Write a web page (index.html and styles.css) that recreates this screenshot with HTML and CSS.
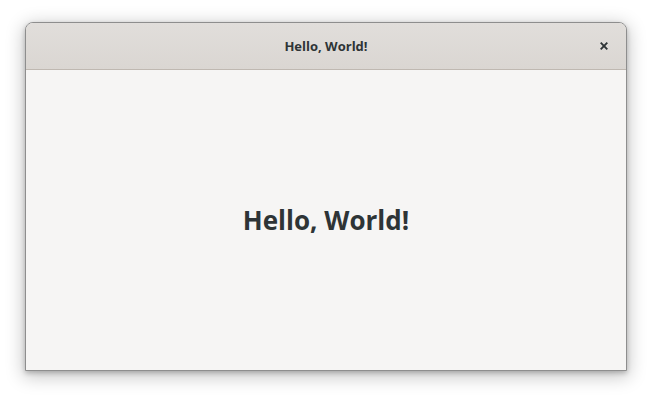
FILE: index.html
```html
<!DOCTYPE html>
<html>
<head>
<meta charset="utf-8">
<link rel="stylesheet" href="styles.css">
</head>
<body>
<div class="window">
  <header class="headerbar">
    <span class="title">Hello, World!</span>
    <button class="close" aria-label="Close">
      <svg width="8" height="8" viewBox="0 0 8 8"><path d="M0.7 0.7 L7.3 7.3 M7.3 0.7 L0.7 7.3" stroke="#2e3436" stroke-width="1.9" stroke-linecap="butt"/></svg>
    </button>
  </header>
  <main class="content">
    <h1 class="greeting">Hello, World!</h1>
  </main>
</div>
</body>
</html>
```
FILE: styles.css
```css
html, body {
  margin: 0;
  padding: 0;
  background: #ffffff;
}
body {
  box-sizing: border-box;
  min-height: 399px;
  padding: 22px 0 28px;
  font-family: "Open Sans", "DejaVu Sans", sans-serif;
  color: #2e3436;
}
.window {
  box-sizing: border-box;
  width: 602px;
  height: 349px;
  margin: 0 0 0 25px;
  border: 1px solid #8e8e8e;
  border-radius: 8px 8px 0 0;
  background: #f6f5f4;
  box-shadow: 0 4px 18px 2px rgba(0,0,0,0.22), 0 2px 5px rgba(0,0,0,0.22);
  display: flex;
  flex-direction: column;
  overflow: hidden;
}
.headerbar {
  position: relative;
  height: 46px;
  flex: 0 0 46px;
  background: linear-gradient(#e1dedb, #dad6d2);
  border-bottom: 1px solid #bfb8b1;
  display: flex;
  align-items: center;
  justify-content: center;
}
.title {
  font-weight: 700;
  font-size: 13px;
}
.close {
  position: absolute;
  right: 18px;
  top: 19px;
  width: 8px;
  height: 8px;
  padding: 0;
  border: 0;
  background: none;
  display: flex;
}
.content {
  flex: 1;
  display: flex;
  align-items: center;
  justify-content: center;
}
.greeting {
  margin: 0;
  font-size: 26px;
  font-weight: 700;
}
```
